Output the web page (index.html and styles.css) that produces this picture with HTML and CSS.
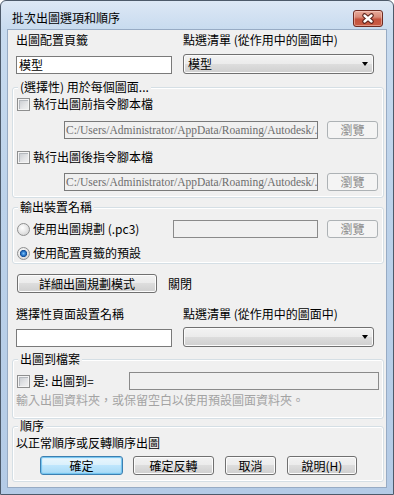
FILE: index.html
```html
<!DOCTYPE html>
<html lang="zh-Hant">
<head>
<meta charset="utf-8">
<title>批次出圖選項和順序</title>
<link rel="stylesheet" href="styles.css">
</head>
<body>
<div class="window">
  <div class="titlebar">
    <span class="title">批次出圖選項和順序</span>
    <span class="close">
      <svg width="28" height="15" viewBox="0 0 28 15">
        <path d="M10.5 4.5 L17.5 10.5 M17.5 4.5 L10.5 10.5" stroke="#5a2119" stroke-width="4.6" stroke-linecap="round" fill="none"/>
        <path d="M10.5 4.5 L17.5 10.5 M17.5 4.5 L10.5 10.5" stroke="#ffffff" stroke-width="2.4" stroke-linecap="round" fill="none"/>
      </svg>
    </span>
  </div>
  <div class="client">
    <div class="pair pair-top">
      <span class="lbl">出圖配置頁籤</span>
      <span class="lbl">點選清單 (從作用中的圖面中)</span>
      <div class="textbox white">模型</div>
      <div class="combo"><span class="combo-text">模型</span><span class="arrow"></span></div>
    </div>

    <div class="group g1">
      <div class="gtitle">(選擇性) 用於每個圖面...</div>
      <div class="check c1"><span class="cb"></span><span>執行出圖前指令腳本檔</span></div>
      <div class="fieldrow p1">
        <div class="textbox path">C:/Users/Administrator/AppData/Roaming/Autodesk/.</div>
        <div class="btn disabled browse">瀏覽</div>
      </div>
      <div class="check c2"><span class="cb"></span><span>執行出圖後指令腳本檔</span></div>
      <div class="fieldrow p2">
        <div class="textbox path">C:/Users/Administrator/AppData/Roaming/Autodesk/.</div>
        <div class="btn disabled browse">瀏覽</div>
      </div>
    </div>

    <div class="group g2">
      <div class="gtitle">輸出裝置名稱</div>
      <div class="fieldrow r1">
        <div class="radio"><span class="rb"></span><span>使用出圖規劃 (.pc3)</span></div>
        <div class="textbox disabled pc3"></div>
        <div class="btn disabled browse">瀏覽</div>
      </div>
      <div class="radio r2"><span class="rb checked"></span><span>使用配置頁籤的預設</span></div>
    </div>

    <div class="detail-row">
      <div class="btn detail">詳細出圖規劃模式</div>
      <span class="state">關閉</span>
    </div>

    <div class="pair pair-bottom">
      <span class="lbl">選擇性頁面設置名稱</span>
      <span class="lbl">點選清單 (從作用中的圖面中)</span>
      <div class="textbox white"></div>
      <div class="combo"><span class="combo-text"></span><span class="arrow"></span></div>
    </div>

    <div class="group g3">
      <div class="gtitle">出圖到檔案</div>
      <div class="fieldrow f1">
        <div class="check"><span class="cb"></span><span>是: 出圖到=</span></div>
        <div class="textbox disabled folder"></div>
      </div>
      <div class="hint">輸入出圖資料夾，或保留空白以使用預設圖面資料夾。</div>
    </div>

    <div class="group g4">
      <div class="gtitle">順序</div>
      <div class="order-text">以正常順序或反轉順序出圖</div>
      <div class="buttons">
        <div class="btn default b-ok">確定</div>
        <div class="btn b-rev">確定反轉</div>
        <div class="btn b-cancel">取消</div>
        <div class="btn b-help">說明(H)</div>
      </div>
    </div>
  </div>
</div>
</body>
</html>
```

FILE: styles.css
```css
* { box-sizing: border-box; }

html, body {
  margin: 0;
  padding: 0;
}

body {
  width: 394px;
  height: 495px;
  overflow: hidden;
  background: #ffffff;
  font-family: "Noto Sans CJK TC", "Noto Sans", sans-serif;
  font-size: 12px;
  line-height: 14px;
  color: #000000;
}

.window {
  width: 394px;
  height: 495px;
  border: 1px solid #4d5a6a;
  border-radius: 6px 6px 0 0;
  background: linear-gradient(#dde8f5 0px, #c8dbef 28px, #bcd2ea 200px, #b4cbe6 100%);
  display: flex;
  flex-direction: column;
}

.titlebar {
  flex: none;
  height: 29px;
  display: flex;
  align-items: flex-start;
  padding: 0 10px 0 11px;
}

.title {
  margin-top: 10px;
  color: #000;
}

.close {
  margin-left: auto;
  margin-top: 9px;
  width: 30px;
  height: 17px;
  border: 1px solid #6e2b22;
  border-radius: 3px;
  background: linear-gradient(#e9ab9c 0%, #d98b79 40%, #c5533e 55%, #c95c44 100%);
  box-shadow: inset 0 0 0 1px rgba(255, 225, 215, 0.45);
  display: flex;
  align-items: center;
  justify-content: center;
}

.close svg { display: block; }

.client {
  flex: none;
  height: 457px;
  margin: 0 7px;
  background: #f0f0f0;
  box-shadow: 0 0 0 1px #97abc4;
  overflow: hidden;
}

/* label + input / combo pairs */
.pair {
  display: grid;
  grid-template-columns: 156px 191px;
  column-gap: 11px;
  align-items: end;
  padding-left: 8px;
}

.pair-top {
  padding-top: 3px;
  row-gap: 7px;
}

.pair-bottom {
  margin-top: 14px;
  row-gap: 6px;
}

.lbl {
  height: 14px;
  white-space: nowrap;
}

.textbox {
  height: 18px;
  border: 1px solid #7a7a7a;
  line-height: 16px;
  white-space: nowrap;
  overflow: hidden;
}

.textbox.white {
  background: #ffffff;
  padding-left: 2px;
}

.textbox.path {
  background: #f0f0f0;
  color: #6d6d6d;
  font-family: "Liberation Serif", "DejaVu Serif", serif;
  font-size: 11.5px;
  padding-left: 1px;
  margin-left: auto;
  width: 254px;
}

.textbox.disabled {
  background: #f0f0f0;
  border-color: #8a8a8a;
}

.combo {
  height: 20px;
  border: 1px solid #707070;
  border-radius: 3px;
  background: linear-gradient(#f3f3f3 0%, #ebebeb 50%, #dddddd 50%, #cfcfcf 100%);
  box-shadow: inset 0 0 0 1px #fbfbfb;
  display: flex;
  align-items: center;
  padding: 0 5px 0 4px;
}

.combo-text { line-height: 14px; }

.arrow {
  margin-left: auto;
  width: 0;
  height: 0;
  border-left: 3px solid transparent;
  border-right: 3px solid transparent;
  border-top: 4px solid #000;
}

/* group boxes */
.group {
  margin: 0 2px 0 4px;
  border: 1px solid #d5dfe5;
  border-radius: 3px;
  box-shadow: inset 0 0 0 1px #ffffff;
  padding: 0 0 0 3px;
}

.gtitle {
  margin: -8px 0 0 2px;
  padding: 0 2px;
  width: fit-content;
  height: 14px;
  background: #f0f0f0;
  white-space: nowrap;
}

.g1 { margin-top: 13px; padding-bottom: 6px; }
.g2 { margin-top: 9px; padding-bottom: 3px; }
.g3 { margin-top: 12px; padding-bottom: 11px; }
.g4 { margin-top: 7px; padding-bottom: 6px; }

.check, .radio {
  display: flex;
  align-items: center;
  gap: 3px;
  height: 14px;
  margin-left: 1px;
  white-space: nowrap;
}

.cb {
  flex: none;
  width: 13px;
  height: 13px;
  border: 1px solid #8e8f8f;
  background: linear-gradient(135deg, #c3c7cc 0%, #e4e5e7 60%, #f2f2f2 100%);
  box-shadow: inset 0 0 0 1px #f4f4f4, inset 1px 1px 0 1px #b4b8bd;
}

.rb {
  flex: none;
  width: 13px;
  height: 13px;
  border-radius: 50%;
  border: 1px solid #8e8f8f;
  background: radial-gradient(circle at 40% 35%, #ffffff 0%, #e9e9e9 45%, #c9c9c9 100%);
}

.rb.checked {
  background:
    radial-gradient(circle at 50% 50%, #7cc4f8 0px, #2b78cc 2px, #174f94 3.3px, rgba(23, 79, 148, 0) 3.9px),
    radial-gradient(circle at 40% 35%, #ffffff 0%, #e9e9e9 45%, #c9c9c9 100%);
}

.c1 { margin-top: 3px; }
.c2 { margin-top: 11px; }

.fieldrow {
  display: flex;
  align-items: center;
  gap: 9px;
  height: 18px;
  padding-right: 5px;
}

.p1 { margin-top: 10px; }
.p2 { margin-top: 9px; }

.r1 { margin-top: 6px; }
.r1 .radio { flex: 1; margin-left: 1px; }
.r2 { margin-top: 8px; }

.pc3 { width: 145px; }

.f1 { margin-top: 6px; padding-right: 4px; }
.f1 .check { flex: 1; }
.folder { width: 250px; }

.hint {
  margin-top: 3px;
  color: #a3a3a3;
  white-space: nowrap;
}

.order-text {
  margin-top: 3px;
  white-space: nowrap;
}

/* buttons */
.btn {
  flex: none;
  height: 19px;
  border: 1px solid #707070;
  border-radius: 3px;
  background: linear-gradient(#f2f2f2 0%, #ebebeb 50%, #dddddd 50%, #cfcfcf 100%);
  box-shadow: inset 0 0 0 1px #fcfcfc;
  display: flex;
  align-items: center;
  justify-content: center;
  white-space: nowrap;
}

.btn.disabled {
  border-color: #adb2b5;
  background: #f4f4f4;
  box-shadow: none;
  color: #8a8a8a;
}

.btn.browse {
  width: 51px;
  height: 18px;
}

.btn.default {
  border-color: #3c7fb1;
  background: linear-gradient(#eaf6fd 0%, #d9f0fc 50%, #bee6fd 50%, #a7d9f5 100%);
  box-shadow: inset 0 0 1px 1px #6fc3ef;
}

.detail-row {
  margin-top: 10px;
  padding-left: 9px;
  display: flex;
  align-items: center;
  height: 19px;
}

.btn.detail { width: 140px; }

.state { margin-left: 11px; }

.buttons {
  margin-top: 6px;
  padding-left: 24px;
  display: flex;
}

.b-ok { width: 83px; }
.b-rev { width: 81px; margin-left: 10px; }
.b-cancel { width: 51px; margin-left: 11px; }
.b-help { width: 70px; margin-left: 11px; }
```
